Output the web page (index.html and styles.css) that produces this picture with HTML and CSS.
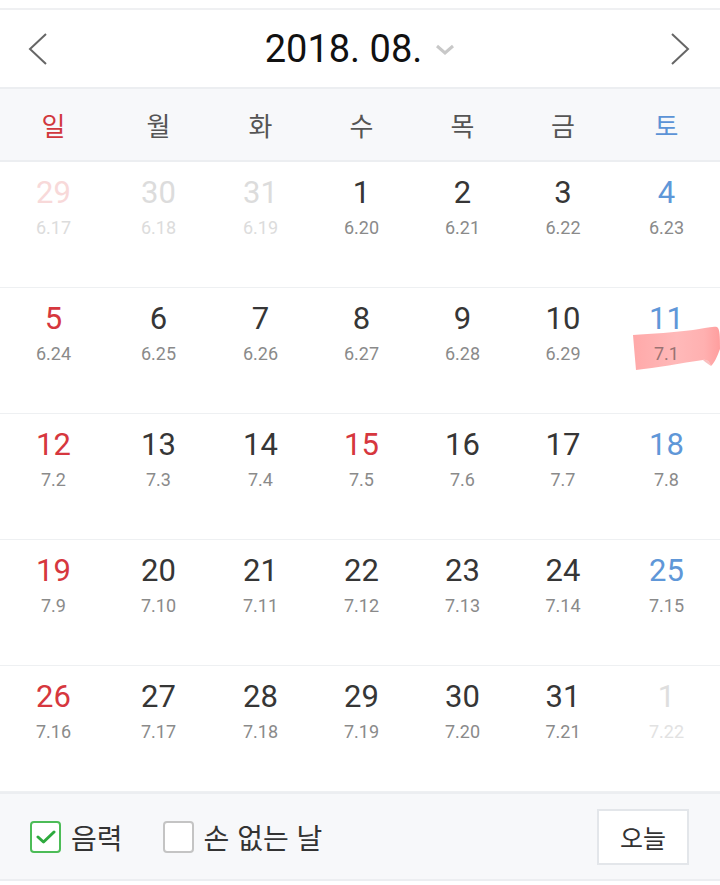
FILE: index.html
```html
<!DOCTYPE html>
<html lang="ko">
<head>
<meta charset="utf-8">
<link rel="stylesheet" href="styles.css">
</head>
<body>
<div class="app">
  <div class="topgap"></div>
  <header class="header">
    <svg class="nav" width="20" height="32" viewBox="0 0 20 32"><path d="M18 1 L2 16 L18 31" fill="none" stroke="#666" stroke-width="2"/></svg>
    <div class="title">
      <span class="title-text">2018. 08.</span>
      <svg class="caret" width="20" height="12" viewBox="0 0 20 12"><path d="M2 2 L10 9 L18 2" fill="none" stroke="#c8c8c8" stroke-width="3"/></svg>
    </div>
    <svg class="nav" width="20" height="32" viewBox="0 0 20 32"><path d="M2 1 L18 16 L2 31" fill="none" stroke="#666" stroke-width="2"/></svg>
  </header>
  <div class="weekdays cols">
    <div class="wd sun">일</div>
    <div class="wd">월</div>
    <div class="wd">화</div>
    <div class="wd">수</div>
    <div class="wd">목</div>
    <div class="wd">금</div>
    <div class="wd sat">토</div>
  </div>
  <div class="grid">
    <div class="row cols">
      <div class="cell fade-sun"><div class="num">29</div><div class="lunar">6.17</div></div>
      <div class="cell fade"><div class="num">30</div><div class="lunar">6.18</div></div>
      <div class="cell fade"><div class="num">31</div><div class="lunar">6.19</div></div>
      <div class="cell"><div class="num">1</div><div class="lunar">6.20</div></div>
      <div class="cell"><div class="num">2</div><div class="lunar">6.21</div></div>
      <div class="cell"><div class="num">3</div><div class="lunar">6.22</div></div>
      <div class="cell sat"><div class="num">4</div><div class="lunar">6.23</div></div>
    </div>
    <div class="row cols">
      <div class="cell sun"><div class="num">5</div><div class="lunar">6.24</div></div>
      <div class="cell"><div class="num">6</div><div class="lunar">6.25</div></div>
      <div class="cell"><div class="num">7</div><div class="lunar">6.26</div></div>
      <div class="cell"><div class="num">8</div><div class="lunar">6.27</div></div>
      <div class="cell"><div class="num">9</div><div class="lunar">6.28</div></div>
      <div class="cell"><div class="num">10</div><div class="lunar">6.29</div></div>
      <div class="cell sat marked">
        <svg class="tape" width="89" height="50" viewBox="0 0 89 50">
          <defs>
            <linearGradient id="tg" x1="0" y1="0" x2="1" y2="0">
              <stop offset="0" stop-color="#ffa9a9"/>
              <stop offset="0.5" stop-color="#ffb9b9"/>
              <stop offset="0.82" stop-color="#ffb0b0"/>
              <stop offset="1" stop-color="#ff9e9e"/>
            </linearGradient>
          </defs>
          <path d="M2 12 C20 11 45 9 62 7 C72 6 80 3 86 4 C89 6 89 14 89 26 C86 34 84 39 80 43 C78 38 76 36 72 37 C50 40 25 45 5 47 C4 36 3 24 2 12 Z" fill="url(#tg)"/>
          <path d="M72 37 C76 36 78 38 80 43 C77 41 74 39 72 37 Z" fill="#f59494" opacity="0.6"/>
        </svg>
        <div class="num">11</div><div class="lunar">7.1</div>
      </div>
    </div>
    <div class="row cols">
      <div class="cell sun"><div class="num">12</div><div class="lunar">7.2</div></div>
      <div class="cell"><div class="num">13</div><div class="lunar">7.3</div></div>
      <div class="cell"><div class="num">14</div><div class="lunar">7.4</div></div>
      <div class="cell sun"><div class="num">15</div><div class="lunar">7.5</div></div>
      <div class="cell"><div class="num">16</div><div class="lunar">7.6</div></div>
      <div class="cell"><div class="num">17</div><div class="lunar">7.7</div></div>
      <div class="cell sat"><div class="num">18</div><div class="lunar">7.8</div></div>
    </div>
    <div class="row cols">
      <div class="cell sun"><div class="num">19</div><div class="lunar">7.9</div></div>
      <div class="cell"><div class="num">20</div><div class="lunar">7.10</div></div>
      <div class="cell"><div class="num">21</div><div class="lunar">7.11</div></div>
      <div class="cell"><div class="num">22</div><div class="lunar">7.12</div></div>
      <div class="cell"><div class="num">23</div><div class="lunar">7.13</div></div>
      <div class="cell"><div class="num">24</div><div class="lunar">7.14</div></div>
      <div class="cell sat"><div class="num">25</div><div class="lunar">7.15</div></div>
    </div>
    <div class="row cols">
      <div class="cell sun"><div class="num">26</div><div class="lunar">7.16</div></div>
      <div class="cell"><div class="num">27</div><div class="lunar">7.17</div></div>
      <div class="cell"><div class="num">28</div><div class="lunar">7.18</div></div>
      <div class="cell"><div class="num">29</div><div class="lunar">7.19</div></div>
      <div class="cell"><div class="num">30</div><div class="lunar">7.20</div></div>
      <div class="cell"><div class="num">31</div><div class="lunar">7.21</div></div>
      <div class="cell fade-next"><div class="num">1</div><div class="lunar">7.22</div></div>
    </div>
  </div>
  <footer class="footer">
    <label class="opt">
      <span class="box checked"><svg width="20" height="16" viewBox="0 0 20 16"><path d="M2 8 L7.5 13 L18 3" fill="none" stroke="#2eaa3e" stroke-width="3" stroke-linecap="round" stroke-linejoin="round"/></svg></span>
      <span class="opt-text">음력</span>
    </label>
    <label class="opt opt2">
      <span class="box"></span>
      <span class="opt-text">손 없는 날</span>
    </label>
    <button class="today">오늘</button>
  </footer>
  <div class="bottomgap"></div>
</div>
</body>
</html>
```

FILE: styles.css
```css
* { box-sizing: border-box; }
html, body { margin: 0; padding: 0; background: #fff; }
body {
  width: 720px;
  height: 885px;
  overflow: hidden;
  font-family: Roboto, "Noto Sans CJK KR", sans-serif;
}
.app { width: 720px; }
.topgap { height: 10px; border-bottom: 2px solid #eff0f2; }
.header {
  height: 79px;
  display: grid;
  grid-template-columns: 20px 1fr 20px;
  align-items: center;
  padding: 0 30px 0 28px;
  border-bottom: 2px solid #eceef1;
}
.nav { display: block; }
.title {
  display: flex;
  align-items: center;
  justify-content: center;
  gap: 13px;
  padding-left: 2px;
}
.title-text {
  font-family: Roboto, sans-serif;
  font-size: 38px;
  color: #111;
  line-height: 44px;
}
.caret { display: block; margin-top: 2px; }
.cols {
  display: grid;
  grid-template-columns: 107px 103px 101px 101px 101px 100px 107px;
}
.weekdays {
  height: 73px;
  background: #f7f8fa;
  border-bottom: 2px solid #eceef1;
  align-items: center;
}
.wd {
  text-align: center;
  font-family: "Noto Sans CJK KR", sans-serif;
  font-size: 26px;
  color: #555;
  line-height: 30px;
}
.wd.sun { color: #d1373d; }
.wd.sat { color: #5b93d6; }
.row {
  height: 126px;
  border-bottom: 1px solid #eef0f2;
}
.cell {
  position: relative;
  text-align: center;
  padding-top: 13px;
}
.num {
  position: relative;
  font-size: 31px;
  line-height: 36px;
  color: #363636;
}
.lunar {
  position: relative;
  margin-top: 6px;
  font-size: 18px;
  line-height: 22px;
  color: #8a8a8a;
}
.cell.sun .num { color: #d6373e; }
.cell.sat .num { color: #5f97d8; }
.cell.fade-sun .num { color: #f8d9d9; }
.cell.fade-sun .lunar,
.cell.fade .num,
.cell.fade .lunar { color: #dcdcdc; }
.cell.fade-next .num { color: #dedede; }
.cell.fade-next .lunar { color: #e2e2e2; }
.cell.marked .lunar { color: #9a7272; }
.tape {
  position: absolute;
  left: 18px;
  top: 35px;
  display: block;
}
.footer {
  height: 89px;
  background: #f7f8fa;
  border-top: 2px solid #eceef1;
  border-bottom: 2px solid #eceef1;
  display: flex;
  align-items: center;
  padding: 0 31px 0 30px;
}
.opt {
  display: flex;
  align-items: center;
  gap: 10px;
}
.opt2 { margin-left: 40px; }
.box {
  width: 31px;
  height: 32px;
  border: 2px solid #c4c4c4;
  border-radius: 4px;
  background: #fff;
  display: flex;
  align-items: center;
  justify-content: center;
}
.box.checked { border-color: #4cbc57; }
.opt-text {
  font-family: "Noto Sans CJK KR", sans-serif;
  font-size: 28px;
  color: #333;
  line-height: 32px;
}
.today {
  margin-left: auto;
  width: 92px;
  height: 56px;
  background: #fff;
  border: 2px solid #e3e6ea;
  border-radius: 0;
  font-family: "Noto Sans CJK KR", sans-serif;
  font-size: 25px;
  color: #333;
  padding: 0;
}
.bottomgap { height: 3px; background: #fff; }
```
